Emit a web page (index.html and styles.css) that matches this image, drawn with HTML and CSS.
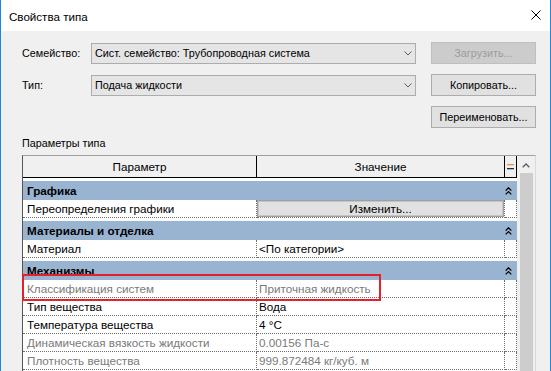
FILE: index.html
```html
<!DOCTYPE html>
<html lang="ru">
<head>
<meta charset="utf-8">
<title>Свойства типа</title>
<link rel="stylesheet" href="styles.css">
</head>
<body>
<div class="window">
  <div class="titlebar">
    <span class="title">Свойства типа</span>
    <svg class="close" width="10" height="10" viewBox="0 0 10 10"><path d="M0.5 0.5L9.5 9.5M9.5 0.5L0.5 9.5" stroke="#000" stroke-width="1" fill="none"/></svg>
  </div>
  <div class="content">
    <div class="form">
      <span class="lbl">Семейство:</span>
      <div class="combo"><span>Сист. семейство: Трубопроводная система</span><svg class="chev" width="8" height="5" viewBox="0 0 8 5"><path d="M0.5 0.5L4 4L7.5 0.5" stroke="#606060" stroke-width="1" fill="none"/></svg></div>
      <button class="btn disabled">Загрузить...</button>
      <span class="lbl">Тип:</span>
      <div class="combo"><span>Подача жидкости</span><svg class="chev" width="8" height="5" viewBox="0 0 8 5"><path d="M0.5 0.5L4 4L7.5 0.5" stroke="#606060" stroke-width="1" fill="none"/></svg></div>
      <button class="btn">Копировать...</button>
      <span></span>
      <span></span>
      <button class="btn">Переименовать...</button>
    </div>
    <div class="section-label">Параметры типа</div>
    <div class="grid-wrap">
      <div class="grid">
        <div class="hdr">
          <div>Параметр</div>
          <div>Значение</div>
          <div class="eq"><svg width="7" height="6" viewBox="0 0 7 6"><rect x="0" y="0" width="7" height="1.3" fill="#e39a3b"/><rect x="0" y="4" width="7" height="1.3" fill="#1f2a5a"/></svg></div>
        </div>

        <div class="group"><div class="gbar"><span>Графика</span><svg class="dchev" width="7" height="8" viewBox="0 0 7 8"><path d="M0.7 3.6L3.5 0.8L6.3 3.6M0.7 7.4L3.5 4.6L6.3 7.4" stroke="#000" stroke-width="1.3" fill="none"/></svg></div></div>
        <div class="row">
          <div class="c1">Переопределения графики</div>
          <div class="c2 btncell"><button class="edit">Изменить...</button></div>
          <div class="c3"></div>
        </div>

        <div class="group"><div class="gbar"><span>Материалы и отделка</span><svg class="dchev" width="7" height="8" viewBox="0 0 7 8"><path d="M0.7 3.6L3.5 0.8L6.3 3.6M0.7 7.4L3.5 4.6L6.3 7.4" stroke="#000" stroke-width="1.3" fill="none"/></svg></div></div>
        <div class="row">
          <div class="c1">Материал</div>
          <div class="c2">&lt;По категории&gt;</div>
          <div class="c3"></div>
        </div>

        <div class="group"><div class="gbar"><span>Механизмы</span><svg class="dchev" width="7" height="8" viewBox="0 0 7 8"><path d="M0.7 3.6L3.5 0.8L6.3 3.6M0.7 7.4L3.5 4.6L6.3 7.4" stroke="#000" stroke-width="1.3" fill="none"/></svg></div></div>
        <div class="row ro">
          <div class="c1">Классификация систем</div>
          <div class="c2">Приточная жидкость</div>
          <div class="c3"></div>
        </div>
        <div class="row">
          <div class="c1">Тип вещества</div>
          <div class="c2">Вода</div>
          <div class="c3"></div>
        </div>
        <div class="row">
          <div class="c1">Температура вещества</div>
          <div class="c2">4 °C</div>
          <div class="c3"></div>
        </div>
        <div class="row ro">
          <div class="c1">Динамическая вязкость жидкости</div>
          <div class="c2">0.00156 Па-с</div>
          <div class="c3"></div>
        </div>
        <div class="row ro">
          <div class="c1">Плотность вещества</div>
          <div class="c2">999.872484 кг/куб. м</div>
          <div class="c3"></div>
        </div>
      </div>
      <div class="scrollbar">
        <div class="sb-up"><svg width="8" height="5" viewBox="0 0 8 5"><path d="M0.7 4.3L4 1L7.3 4.3" stroke="#606060" stroke-width="1.4" fill="none"/></svg></div>
        <div class="sb-thumb"></div>
      </div>
      <div class="highlight"></div>
    </div>
  </div>
</div>
</body>
</html>
```

FILE: styles.css
```css
* {
  box-sizing: border-box;
}

html,
body {
  margin: 0;
  padding: 0;
}

body {
  width: 551px;
  height: 371px;
  overflow: hidden;
  background: #f0f0f0;
  color: #000;
  font-family: "Liberation Sans", Arial, sans-serif;
}

.window {
  width: 551px;
  height: 371px;
  border-left: 1px solid #1c87dc;
  border-right: 1px solid #1c87dc;
  background: #f0f0f0;
  display: flex;
  flex-direction: column;
}

.titlebar {
  height: 31px;
  flex: none;
  background: #fff;
  display: flex;
  justify-content: space-between;
  align-items: flex-start;
  padding-left: 8px;
}

.title {
  font-size: 11.6px;
  line-height: 14px;
  margin-top: 10px;
}

.close {
  margin-top: 10px;
  margin-right: 9px;
}

.content {
  padding: 11px 0 0 21px;
}

.form {
  display: grid;
  grid-template-columns: 69px 340px 105px;
  grid-template-rows: 22px 22px 22px;
  row-gap: 10px;
  align-items: center;
  font-size: 10.8px;
}

.lbl {
  line-height: 14px;
}

.combo {
  width: 325px;
  height: 21px;
  background: #e5e5e5;
  border: 1px solid #acacac;
  display: flex;
  align-items: center;
  justify-content: space-between;
  padding: 0 3px 0 3px;
  white-space: nowrap;
}

.btn {
  height: 22px;
  background: #e1e1e1;
  border: 1px solid #adadad;
  font: inherit;
  color: #000;
  padding: 0;
  margin: 0;
}

.btn.disabled {
  background: #cccccc;
  border-color: #bfbfbf;
  color: #9d9d9d;
}

.section-label {
  font-size: 10.8px;
  line-height: 14px;
  margin-top: 8px;
  margin-bottom: 5px;
}

.grid-wrap {
  position: relative;
  width: 514px;
  height: 216px;
  border-top: 1px solid #a0a0a0;
  border-left: 1px solid #555;
  border-right: 1px solid #dadada;
  display: flex;
}

.grid {
  width: 494px;
  background: #fff;
  font-size: 11.7px;
}

.hdr {
  display: grid;
  grid-template-columns: 234px 248px 12px;
  height: 22px;
  background: #f0f0f0;
  border-bottom: 1px solid #000;
}

.hdr > div {
  border-right: 1px solid #000;
  text-align: center;
  line-height: 21px;
}

.hdr .eq {
  display: flex;
  align-items: center;
  justify-content: center;
}

.group {
  height: 22px;
  padding-top: 3px;
  background: #fff;
}

.gbar {
  height: 19px;
  background: #99b4d1;
  display: grid;
  grid-template-columns: 482px 12px;
  align-items: center;
  font-weight: bold;
  line-height: 19px;
}

.gbar span {
  padding-left: 4px;
}

.row {
  display: grid;
  grid-template-columns: 234px 248px 12px;
  height: 18px;
}

.row > div {
  border-right: 1px dotted #6e6e6e;
  border-bottom: 1px dotted #6e6e6e;
  line-height: 17px;
  white-space: nowrap;
  overflow: hidden;
}

.row .c1 {
  padding-left: 4px;
}

.row .c2 {
  padding-left: 2px;
}

.row .btncell {
  padding: 0;
}

.row.ro > div {
  color: #7a7a7a;
}

.edit {
  display: block;
  width: 100%;
  height: 17px;
  margin: 0;
  padding: 0;
  background: #e1e1e1;
  border: 1px solid #a0a0a0;
  box-shadow: inset 0 0 0 1px #c4c4c4;
  font: inherit;
  line-height: 14px;
  color: #000;
}

.scrollbar {
  width: 18px;
  display: flex;
  flex-direction: column;
  background: #f0f0f0;
}

.sb-up {
  height: 17px;
  flex: none;
  padding: 7px 0 0 5px;
}

.sb-up svg {
  display: block;
}

.sb-thumb {
  flex: 1;
  width: 13px;
  margin-left: 3px;
  background: #cdcdcd;
}

.highlight {
  position: absolute;
  left: -1px;
  top: 118px;
  width: 359px;
  height: 27px;
  border: 2px solid #e3212b;
}
```
